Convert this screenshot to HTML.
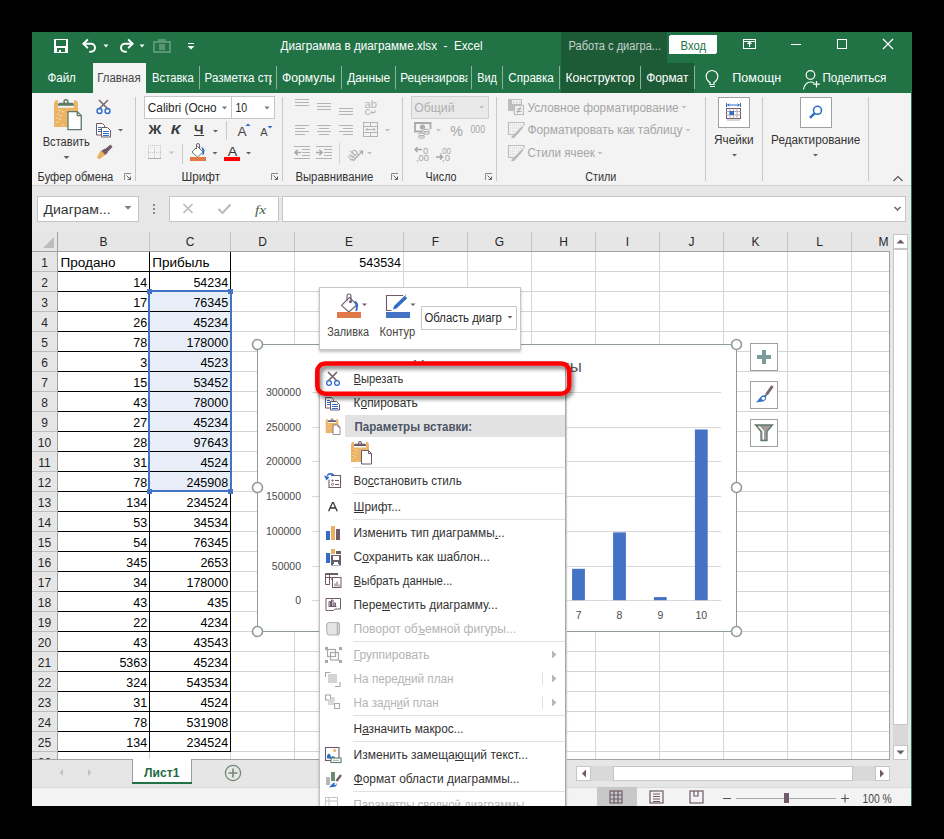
<!DOCTYPE html>
<html><head><meta charset="utf-8"><title>Excel</title>
<style>html,body{margin:0;padding:0;background:#000;width:944px;height:839px;overflow:hidden}
text{shape-rendering:auto;white-space:pre}</style></head>
<body><svg width="944" height="839" viewBox="0 0 944 839" shape-rendering="crispEdges" style="display:block"><rect x="0" y="0" width="944" height="839" fill="#000" />
<rect x="32" y="32" width="880" height="774" fill="#f3f3f3" />
<rect x="32" y="32" width="880" height="61" fill="#217346" />
<rect x="561" y="32" width="106" height="31" fill="#1d5b37" />
<rect x="561" y="63" width="133" height="30" fill="#1d5b37" />
<rect x="93" y="63" width="53" height="30" fill="#f3f3f3" />
<text x="280.5" y="49.5" font-size="12" fill="#fff" font-family="Liberation Sans" textLength="202" lengthAdjust="spacingAndGlyphs" >Диаграмма в диаграмме.xlsx  -  Excel</text>
<text x="568.5" y="49.5" font-size="12" fill="#c8d2cc" font-family="Liberation Sans" textLength="92.5" lengthAdjust="spacingAndGlyphs" >Работа с диагра...</text>
<rect x="669" y="35" width="48" height="19" fill="#fff" rx="2"/>
<text x="680.5" y="49.5" font-size="12" fill="#217346" font-family="Liberation Sans" textLength="25.5" lengthAdjust="spacingAndGlyphs" >Вход</text>
<defs><clipPath id="c1"><rect x="190" y="63" width="82" height="30"/></clipPath><clipPath id="c2"><rect x="396" y="63" width="71.6" height="30"/></clipPath></defs>
<text x="47.4" y="81.6" font-size="12" fill="#fff" font-family="Liberation Sans" textLength="28.5" lengthAdjust="spacingAndGlyphs" >Файл</text>
<text x="97.3" y="81.6" font-size="12" fill="#444" font-family="Liberation Sans" textLength="43.3" lengthAdjust="spacingAndGlyphs" >Главная</text>
<text x="152.1" y="81.6" font-size="12" fill="#fff" font-family="Liberation Sans" textLength="41.6" lengthAdjust="spacingAndGlyphs" >Вставка</text>
<g clip-path="url(#c1)">
<text x="204.6" y="81.6" font-size="12" fill="#fff" font-family="Liberation Sans" textLength="70.5" lengthAdjust="spacingAndGlyphs" >Разметка стр</text>
</g>
<text x="282" y="81.6" font-size="12" fill="#fff" font-family="Liberation Sans" textLength="53" lengthAdjust="spacingAndGlyphs" >Формулы</text>
<text x="347.2" y="81.6" font-size="12" fill="#fff" font-family="Liberation Sans" textLength="43" lengthAdjust="spacingAndGlyphs" >Данные</text>
<g clip-path="url(#c2)">
<text x="400.3" y="81.6" font-size="12" fill="#fff" font-family="Liberation Sans" textLength="71" lengthAdjust="spacingAndGlyphs" >Рецензирова</text>
</g>
<text x="477.2" y="81.6" font-size="12" fill="#fff" font-family="Liberation Sans" textLength="19.7" lengthAdjust="spacingAndGlyphs" >Вид</text>
<text x="508.3" y="81.6" font-size="12" fill="#fff" font-family="Liberation Sans" textLength="45.5" lengthAdjust="spacingAndGlyphs" >Справка</text>
<text x="565.4" y="81.6" font-size="12" fill="#fff" font-family="Liberation Sans" textLength="69.4" lengthAdjust="spacingAndGlyphs" >Конструктор</text>
<text x="646.2" y="81.6" font-size="12" fill="#fff" font-family="Liberation Sans" textLength="42.2" lengthAdjust="spacingAndGlyphs" >Формат</text>
<rect x="199" y="66" width="1" height="23" fill="#8cb39b" />
<rect x="276" y="66" width="1" height="23" fill="#8cb39b" />
<rect x="341" y="66" width="1" height="23" fill="#8cb39b" />
<rect x="395" y="66" width="1" height="23" fill="#8cb39b" />
<rect x="471" y="66" width="1" height="23" fill="#8cb39b" />
<rect x="502" y="66" width="1" height="23" fill="#8cb39b" />
<rect x="559" y="66" width="1" height="23" fill="#8cb39b" />
<rect x="640" y="66" width="1" height="23" fill="#8cb39b" />
<rect x="694" y="66" width="1" height="23" fill="#8cb39b" />
<text x="732.3" y="81.6" font-size="12" fill="#fff" font-family="Liberation Sans" textLength="49" lengthAdjust="spacingAndGlyphs" >Помощн</text>
<text x="822.4" y="81.6" font-size="12" fill="#fff" font-family="Liberation Sans" textLength="64" lengthAdjust="spacingAndGlyphs" >Поделиться</text>
<rect x="54" y="39" width="14" height="14" fill="#fff" />
<rect x="56" y="40" width="10" height="6" fill="#217346" />
<rect x="57" y="48" width="8" height="4" fill="#217346" />
<rect x="59" y="50" width="2" height="2" fill="#fff" />
<g shape-rendering="auto" fill="none" stroke="#fff" stroke-width="2" stroke-linecap="round" stroke-linejoin="round"><path d="M83.5 43.8h7.5a4 4 0 0 1 0 8h-1"/><path d="M87.3 40l-3.8 3.8l3.8 3.8"/></g>
<path d="M103.5 44.5h5l-2.5 3z" fill="#fff" shape-rendering="auto"/>
<g shape-rendering="auto" fill="none" stroke="#fff" stroke-width="2" stroke-linecap="round" stroke-linejoin="round"><path d="M132.5 43.8h-7.5a4 4 0 0 0 0 8h1"/><path d="M128.7 40l3.8 3.8l-3.8 3.8"/></g>
<path d="M139.5 44.5h5l-2.5 3z" fill="#fff" shape-rendering="auto"/>
<g opacity="0.45">
<rect x="154" y="42" width="16" height="10" fill="none" stroke="#9fc2ac" stroke-width="1.5"/>
<rect x="158" y="39" width="8" height="3" fill="#9fc2ac" />
<rect x="159" y="44" width="6" height="6" fill="#9fc2ac" />
</g>
<rect x="188" y="43" width="6" height="1.3" fill="#fff" />
<path d="M187.5 46h7l-3.5 3.5z" fill="#fff" shape-rendering="auto"/>
<rect x="743.6" y="39.6" width="11.8" height="8.8" fill="none" stroke="#fff" stroke-width="1.2" />
<path d="M749.5 47v-5m-2 2l2-2l2 2" fill="none" stroke="#fff" stroke-width="1.1" shape-rendering="auto"/>
<rect x="744" y="41" width="12" height="1" fill="#fff" />
<rect x="791" y="44" width="10" height="1" fill="#fff" />
<rect x="837.5" y="39.5" width="9" height="9" fill="none" stroke="#fff" stroke-width="1" />
<path d="M883 39l10 10M893 39l-10 10" fill="none" stroke="#fff" stroke-width="1.2" shape-rendering="auto"/>
<path d="M710 84.5v-2c-2.2-1.3-3.8-3.5-3.8-6.2a5.8 5.8 0 0 1 11.6 0c0 2.7-1.6 4.9-3.8 6.2v2z" fill="none" stroke="#fff" stroke-width="1.2" shape-rendering="auto"/>
<rect x="710" y="86" width="5" height="1" fill="#fff" />
<g shape-rendering="auto" fill="none" stroke="#fff" stroke-width="1.2"><circle cx="810.5" cy="75" r="4.3"/><path d="M803.5 89.5c0.5-4.5 3.5-7.5 7-7.5c1.5 0 2.7 0.4 3.5 1"/><path d="M816.5 81v6.5M813.2 84.2h6.6"/></g>
<rect x="32" y="185" width="880" height="1" fill="#d4d4d4" />
<rect x="32" y="186" width="880" height="46" fill="#e7e7e7" />
<rect x="135" y="97" width="1" height="84" fill="#c8c8c8" />
<rect x="282" y="97" width="1" height="84" fill="#c8c8c8" />
<rect x="402" y="97" width="1" height="84" fill="#c8c8c8" />
<rect x="496" y="97" width="1" height="84" fill="#c8c8c8" />
<rect x="705" y="97" width="1" height="84" fill="#c8c8c8" />
<rect x="762" y="97" width="1" height="84" fill="#c8c8c8" />
<rect x="868" y="97" width="1" height="84" fill="#c8c8c8" />
<text x="42.7" y="145.8" font-size="12" fill="#333" font-family="Liberation Sans" textLength="47" lengthAdjust="spacingAndGlyphs" >Вставить</text>
<path d="M63.5 156h6l-3 3z" fill="#6f5a6a" shape-rendering="auto"/>
<g transform="translate(54 99) scale(1.33)" shape-rendering="auto"><path d="M0 3.5q0-1.5 1.5-2.5h1.5v5.5h12v-5.5h1.5q1.5 1 1.5 2.5v17.5h-18z" fill="#ebb467"/><path d="M3 5h12v-0.7c0-1-0.8-1.5-1.5-1.5h-2.5v-0.8a2 2 0 0 0-4 0v0.8h-2.5c-0.7 0-1.5 0.5-1.5 1.5z" fill="#5f7a65"/><rect x="8.2" y="1.3" width="1.6" height="1.4" fill="#fff"/><g fill="#fbe7c6"><circle cx="4.2" cy="8.5" r="0.6"/><circle cx="3.2" cy="11.5" r="0.6"/><circle cx="5.3" cy="12.5" r="0.6"/><circle cx="2.5" cy="14.5" r="0.6"/><circle cx="4.5" cy="15.5" r="0.6"/><circle cx="2.5" cy="17.5" r="0.6"/><circle cx="6.5" cy="19.5" r="0.6"/><circle cx="6.5" cy="9.5" r="0.6"/></g><path d="M10.5 9.5h7l3 3v10.5h-10z" fill="#fff" stroke="#5f7a65" stroke-width="1"/><path d="M17.5 9.5v3h3" fill="none" stroke="#5f7a65" stroke-width="1"/></g>
<g shape-rendering="auto" fill="none"><path d="M99 100l9 9M108 100l-9 9" stroke="#74646e" stroke-width="1.5"/><circle cx="99.5" cy="111" r="2.5" stroke="#2f6ec4" stroke-width="1.4"/><circle cx="107.5" cy="111" r="2.5" stroke="#2f6ec4" stroke-width="1.4"/></g>
<g><path d="M96.5 123.5h6l2 2v9.5h-8z" fill="#fff" stroke="#6f5a6a" shape-rendering="auto"/><path d="M101.5 127.5h6l3 3v6.5h-9z" fill="#fff" stroke="#6f5a6a" shape-rendering="auto"/></g>
<rect x="98" y="127" width="3" height="1" fill="#2f6ec4" />
<rect x="98" y="129" width="3" height="1" fill="#2f6ec4" />
<rect x="98" y="131" width="3" height="1" fill="#2f6ec4" />
<rect x="103" y="131" width="6" height="1" fill="#2f6ec4" />
<rect x="103" y="133" width="6" height="1" fill="#2f6ec4" />
<rect x="103" y="135" width="6" height="1" fill="#2f6ec4" />
<path d="M118 129h5l-2.5 2.5z" fill="#6f5a6a" shape-rendering="auto"/>
<g shape-rendering="auto"><path d="M104 150l6.5-5.5l2 2.5l-6 6z" fill="#6f5a6a"/><path d="M97 157l4-7l5 4.5l-7 5z" fill="#e8b062"/><path d="M101.5 151l3-2.5l3.5 3.5l-2.5 3z" fill="#6f5a6a"/></g>
<text x="37.6" y="180.5" font-size="12" fill="#333" font-family="Liberation Sans" textLength="75.7" lengthAdjust="spacingAndGlyphs" >Буфер обмена</text>
<g shape-rendering="auto"><path d="M124.5 180v-6.5h6.5" fill="none" stroke="#8a8a8a" stroke-width="1"/><path d="M126.5 175.5l4 4m0-3v3h-3" fill="none" stroke="#666" stroke-width="1"/></g>
<rect x="144" y="96" width="131" height="23" fill="#fff" />
<rect x="144.5" y="96.5" width="130" height="22" fill="none" stroke="#c6c6c6" stroke-width="1" />
<rect x="231" y="97" width="1" height="21" fill="#c6c6c6" />
<text x="147.8" y="112" font-size="12" fill="#262626" font-family="Liberation Sans" textLength="68.8" lengthAdjust="spacingAndGlyphs" >Calibri (Осно</text>
<path d="M222 106.5h5l-2.5 3z" fill="#777" shape-rendering="auto"/>
<text x="235.5" y="112" font-size="12" fill="#262626" font-family="Liberation Sans" textLength="11.7" lengthAdjust="spacingAndGlyphs" >10</text>
<path d="M264.5 106.5h5l-2.5 3z" fill="#777" shape-rendering="auto"/>
<text x="148.5" y="134" font-size="12.5" fill="#3a3a3a" font-family="Liberation Sans" textLength="12.8" lengthAdjust="spacingAndGlyphs" font-weight="bold" >Ж</text>
<text x="170.8" y="134" font-size="12.5" fill="#3a3a3a" font-family="Liberation Sans" textLength="9.8" lengthAdjust="spacingAndGlyphs" font-weight="bold" font-style="italic">К</text>
<text x="194.1" y="134" font-size="12.5" fill="#3a3a3a" font-family="Liberation Sans" textLength="9.5" lengthAdjust="spacingAndGlyphs" font-weight="bold" >Ч</text>
<rect x="194" y="135" width="10" height="1" fill="#3a3a3a" />
<path d="M213 130h5l-2.5 2.5z" fill="#6f5a6a" shape-rendering="auto"/>
<rect x="226" y="121" width="1" height="19" fill="#c8c8c8" />
<text x="237.6" y="136.3" font-size="13.5" fill="#444" font-family="Liberation Sans" textLength="9.1" lengthAdjust="spacingAndGlyphs" >A</text>
<path d="M245.5 126l2.5-2.5l2.5 2.5z" fill="#2f6ec4" shape-rendering="auto"/>
<text x="260.3" y="136.3" font-size="11" fill="#444" font-family="Liberation Sans" textLength="7.4" lengthAdjust="spacingAndGlyphs" >A</text>
<path d="M267.5 126l2.5 2.5l2.5-2.5z" fill="#2f6ec4" shape-rendering="auto"/>
<g fill="#c4c4c4">
<rect x="148" y="145" width="1" height="1" fill="#c4c4c4" />
<rect x="148" y="152" width="1" height="1" fill="#c4c4c4" />
<rect x="148" y="145" width="1" height="1" fill="#c4c4c4" />
<rect x="154" y="145" width="1" height="1" fill="#c4c4c4" />
<rect x="160" y="145" width="1" height="1" fill="#c4c4c4" />
<rect x="150" y="145" width="1" height="1" fill="#c4c4c4" />
<rect x="150" y="152" width="1" height="1" fill="#c4c4c4" />
<rect x="148" y="147" width="1" height="1" fill="#c4c4c4" />
<rect x="154" y="147" width="1" height="1" fill="#c4c4c4" />
<rect x="160" y="147" width="1" height="1" fill="#c4c4c4" />
<rect x="152" y="145" width="1" height="1" fill="#c4c4c4" />
<rect x="152" y="152" width="1" height="1" fill="#c4c4c4" />
<rect x="148" y="149" width="1" height="1" fill="#c4c4c4" />
<rect x="154" y="149" width="1" height="1" fill="#c4c4c4" />
<rect x="160" y="149" width="1" height="1" fill="#c4c4c4" />
<rect x="154" y="145" width="1" height="1" fill="#c4c4c4" />
<rect x="154" y="152" width="1" height="1" fill="#c4c4c4" />
<rect x="148" y="151" width="1" height="1" fill="#c4c4c4" />
<rect x="154" y="151" width="1" height="1" fill="#c4c4c4" />
<rect x="160" y="151" width="1" height="1" fill="#c4c4c4" />
<rect x="156" y="145" width="1" height="1" fill="#c4c4c4" />
<rect x="156" y="152" width="1" height="1" fill="#c4c4c4" />
<rect x="148" y="153" width="1" height="1" fill="#c4c4c4" />
<rect x="154" y="153" width="1" height="1" fill="#c4c4c4" />
<rect x="160" y="153" width="1" height="1" fill="#c4c4c4" />
<rect x="158" y="145" width="1" height="1" fill="#c4c4c4" />
<rect x="158" y="152" width="1" height="1" fill="#c4c4c4" />
<rect x="148" y="155" width="1" height="1" fill="#c4c4c4" />
<rect x="154" y="155" width="1" height="1" fill="#c4c4c4" />
<rect x="160" y="155" width="1" height="1" fill="#c4c4c4" />
<rect x="160" y="145" width="1" height="1" fill="#c4c4c4" />
<rect x="160" y="152" width="1" height="1" fill="#c4c4c4" />
<rect x="148" y="157" width="1" height="1" fill="#c4c4c4" />
<rect x="154" y="157" width="1" height="1" fill="#c4c4c4" />
<rect x="160" y="157" width="1" height="1" fill="#c4c4c4" />
</g>
<rect x="148" y="158" width="13" height="1" fill="#b0b0b0" />
<path d="M169 151.5h5l-2.5 2.5z" fill="#c0c0c0" shape-rendering="auto"/>
<rect x="182" y="144" width="1" height="20" fill="#c8c8c8" />
<g shape-rendering="auto" fill="none" stroke="#5f7a65" stroke-width="1"><path d="M192 152l5.5-5.5l5.5 5.5l-5.5 5z" fill="#fff"/><path d="M196.5 149v-4a1.5 1.5 0 0 1 3 0v4" stroke="#6f5a6a"/></g><path d="M201.5 147l2 1.2l1 2.3l-0.6 4l-1.5 0.8l0.3-3.5z" fill="#2f6ec4" shape-rendering="auto"/>
<rect x="190" y="157" width="16" height="4" fill="#e07848" />
<path d="M212.5 152h5l-2.5 2.5z" fill="#6f5a6a" shape-rendering="auto"/>
<text x="227.8" y="156" font-size="13.5" fill="#333" font-family="Liberation Sans" textLength="9.5" lengthAdjust="spacingAndGlyphs" >A</text>
<rect x="224" y="157" width="16" height="4" fill="#ff0000" />
<path d="M246 152h5l-2.5 2.5z" fill="#6f5a6a" shape-rendering="auto"/>
<text x="181.5" y="180.5" font-size="12" fill="#333" font-family="Liberation Sans" textLength="38.6" lengthAdjust="spacingAndGlyphs" >Шрифт</text>
<g shape-rendering="auto"><path d="M271.5 180v-6.5h6.5" fill="none" stroke="#8a8a8a" stroke-width="1"/><path d="M273.5 175.5l4 4m0-3v3h-3" fill="none" stroke="#666" stroke-width="1"/></g>
<rect x="295" y="99" width="14" height="1" fill="#b4b4b4" />
<rect x="295" y="102" width="14" height="1" fill="#b4b4b4" />
<rect x="295" y="105" width="14" height="1" fill="#b4b4b4" />
<rect x="317" y="103" width="14" height="1" fill="#b4b4b4" />
<rect x="317" y="106" width="14" height="1" fill="#b4b4b4" />
<rect x="317" y="109" width="14" height="1" fill="#b4b4b4" />
<rect x="339" y="108" width="14" height="1" fill="#b4b4b4" />
<rect x="339" y="111" width="14" height="1" fill="#b4b4b4" />
<rect x="339" y="114" width="14" height="1" fill="#b4b4b4" />
<text x="364.5" y="107.5" font-size="11" fill="#b4b4b4" font-family="Liberation Sans" textLength="12.5" lengthAdjust="spacingAndGlyphs" >ab</text>
<text x="364.5" y="114.5" font-size="11" fill="#b4b4b4" font-family="Liberation Sans" textLength="6" lengthAdjust="spacingAndGlyphs" >c</text>
<path d="M375 110v2.5h-4m1.5-1.5l-1.5 1.5l1.5 1.5" fill="none" stroke="#b4b4b4" stroke-width="1" shape-rendering="auto"/>
<rect x="295" y="125" width="14" height="1" fill="#b4b4b4" />
<rect x="295" y="128" width="10" height="1" fill="#b4b4b4" />
<rect x="295" y="131" width="14" height="1" fill="#b4b4b4" />
<rect x="295" y="134" width="10" height="1" fill="#b4b4b4" />
<rect x="317" y="125" width="14" height="1" fill="#b4b4b4" />
<rect x="319" y="128" width="10" height="1" fill="#b4b4b4" />
<rect x="317" y="131" width="14" height="1" fill="#b4b4b4" />
<rect x="319" y="134" width="10" height="1" fill="#b4b4b4" />
<rect x="339" y="125" width="14" height="1" fill="#b4b4b4" />
<rect x="343" y="128" width="10" height="1" fill="#b4b4b4" />
<rect x="339" y="131" width="14" height="1" fill="#b4b4b4" />
<rect x="343" y="134" width="10" height="1" fill="#b4b4b4" />
<rect x="363.5" y="122.5" width="14" height="14" fill="none" stroke="#b4b4b4" stroke-width="1" />
<rect x="363" y="126" width="15" height="1" fill="#b4b4b4" />
<rect x="363" y="132" width="15" height="1" fill="#b4b4b4" />
<rect x="370" y="122" width="1" height="4" fill="#b4b4b4" />
<rect x="370" y="133" width="1" height="4" fill="#b4b4b4" />
<path d="M366 129.5h9m-7.5-1.5l-1.5 1.5l1.5 1.5m6-3l1.5 1.5l-1.5 1.5" fill="none" stroke="#b4b4b4" stroke-width="1" shape-rendering="auto"/>
<path d="M385 129h5l-2.5 2.5z" fill="#c0c0c0" shape-rendering="auto"/>
<rect x="294" y="146" width="16" height="1" fill="#b4b4b4" />
<rect x="294" y="158" width="16" height="1" fill="#b4b4b4" />
<rect x="302" y="149" width="8" height="1" fill="#b4b4b4" />
<rect x="302" y="152" width="8" height="1" fill="#b4b4b4" />
<rect x="302" y="155" width="8" height="1" fill="#b4b4b4" />
<rect x="316" y="146" width="16" height="1" fill="#b4b4b4" />
<rect x="316" y="158" width="16" height="1" fill="#b4b4b4" />
<rect x="324" y="149" width="8" height="1" fill="#b4b4b4" />
<rect x="324" y="152" width="8" height="1" fill="#b4b4b4" />
<rect x="324" y="155" width="8" height="1" fill="#b4b4b4" />
<path d="M301 152.5h-6m2.7-2.7l-2.7 2.7l2.7 2.7" fill="none" stroke="#a8a8a8" stroke-width="1.5" shape-rendering="auto"/>
<path d="M316 152.5h6m-2.7-2.7l2.7 2.7l-2.7 2.7" fill="none" stroke="#a8a8a8" stroke-width="1.5" shape-rendering="auto"/>
<rect x="339" y="143" width="1" height="21" fill="#d4d4d4" />
<g shape-rendering="auto"><text x="346" y="158" font-size="10.5" fill="#a8a8a8" font-family="Liberation Sans" transform="rotate(-50 352 154)">ab</text><path d="M353 161l9.5-10m-3.2 0h3.2v3.2" stroke="#a8a8a8" fill="none" stroke-width="1.2"/></g>
<path d="M367 152h5l-2.5 2.5z" fill="#c0c0c0" shape-rendering="auto"/>
<text x="295.4" y="180.5" font-size="12" fill="#333" font-family="Liberation Sans" textLength="78" lengthAdjust="spacingAndGlyphs" >Выравнивание</text>
<g shape-rendering="auto"><path d="M391.5 180v-6.5h6.5" fill="none" stroke="#8a8a8a" stroke-width="1"/><path d="M393.5 175.5l4 4m0-3v3h-3" fill="none" stroke="#666" stroke-width="1"/></g>
<rect x="411" y="96" width="78" height="23" fill="#e9e9e9" />
<rect x="411.5" y="96.5" width="77" height="22" fill="none" stroke="#cfcfcf" stroke-width="1" />
<text x="414.2" y="112" font-size="12" fill="#b0b0b0" font-family="Liberation Sans" textLength="40.3" lengthAdjust="spacingAndGlyphs" >Общий</text>
<path d="M479 106h5l-2.5 2.5z" fill="#c0c0c0" shape-rendering="auto"/>
<g shape-rendering="auto" fill="none" stroke="#ababab"><path d="M423 131.5h-8v-8.5h15.5v6" stroke-width="1.8"/><circle cx="422.5" cy="127" r="2.6" fill="#ababab" stroke="none"/><ellipse cx="426.5" cy="130.5" rx="3" ry="1.3" stroke-width="1"/><ellipse cx="426.5" cy="133" rx="3" ry="1.3" stroke-width="1"/><ellipse cx="421.5" cy="134.5" rx="3" ry="1.3" stroke-width="1"/><ellipse cx="421.5" cy="137" rx="3" ry="1.3" stroke-width="1"/></g>
<path d="M436 129h5l-2.5 2.5z" fill="#c0c0c0" shape-rendering="auto"/>
<text x="450.3" y="136" font-size="14" fill="#a4a4a4" font-family="Liberation Sans" textLength="12.6" lengthAdjust="spacingAndGlyphs" >%</text>
<text x="470.5" y="133.4" font-size="10" fill="#a4a4a4" font-family="Liberation Sans" textLength="14.5" lengthAdjust="spacingAndGlyphs" >000</text>
<text x="423" y="153.5" font-size="9.5" fill="#a4a4a4" font-family="Liberation Sans" >0</text>
<text x="416" y="160.5" font-size="9.5" fill="#a4a4a4" font-family="Liberation Sans" textLength="13" lengthAdjust="spacingAndGlyphs" >,00</text>
<path d="M422 149.5h-7m2.5-2.5l-2.5 2.5l2.5 2.5" fill="none" stroke="#a4a4a4" stroke-width="1.3" shape-rendering="auto"/>
<text x="440" y="153.5" font-size="9.5" fill="#a4a4a4" font-family="Liberation Sans" textLength="11" lengthAdjust="spacingAndGlyphs" >,00</text>
<text x="442" y="160.5" font-size="9.5" fill="#a4a4a4" font-family="Liberation Sans" textLength="8" lengthAdjust="spacingAndGlyphs" >,0</text>
<path d="M436 157h6.5m-2.5-2.5l2.5 2.5l-2.5 2.5" fill="none" stroke="#a4a4a4" stroke-width="1.3" shape-rendering="auto"/>
<text x="425.6" y="180.5" font-size="12" fill="#333" font-family="Liberation Sans" textLength="31" lengthAdjust="spacingAndGlyphs" >Число</text>
<g shape-rendering="auto"><path d="M485.5 180v-6.5h6.5" fill="none" stroke="#8a8a8a" stroke-width="1"/><path d="M487.5 175.5l4 4m0-3v3h-3" fill="none" stroke="#666" stroke-width="1"/></g>
<g shape-rendering="auto"><rect x="508" y="99" width="14" height="12" fill="#bdbdbd"/><path d="M512 100h9v4h-9z" fill="#f3f3f3"/><path d="M514 101.5v2M517 101.5v2M520 101.5v2" stroke="#bdbdbd"/><rect x="514.5" y="105.5" width="9" height="9" fill="#f3f3f3" stroke="#bdbdbd" stroke-width="1.2"/><path d="M516.5 109h5M516.5 111.5h5M520.5 107l-3 6" stroke="#a0a0a0" stroke-width="0.9"/></g>
<text x="527.4" y="111.6" font-size="12" fill="#a6a6a6" font-family="Liberation Sans" textLength="151.3" lengthAdjust="spacingAndGlyphs" >Условное форматирование</text>
<path d="M681.5 106h5l-2.5 2.5z" fill="#c0c0c0" shape-rendering="auto"/>
<g shape-rendering="auto"><path d="M508.5 134.5v-12h15.5v3" fill="none" stroke="#bdbdbd" stroke-width="1.2"/><path d="M508.5 134.5h6" stroke="#bdbdbd" stroke-width="1.2"/><path d="M510 125h12M510 128h9M510 131h5" stroke="#d0d0d0" stroke-dasharray="1 1"/><path d="M511 137.5l9-9.5l3.5-3l-1 3.5l-7.5 8.5c-1 1.5-2.5 1.5-4 0.5z" fill="#b8b8b8"/></g>
<text x="527.4" y="134.4" font-size="12" fill="#a6a6a6" font-family="Liberation Sans" textLength="155.1" lengthAdjust="spacingAndGlyphs" >Форматировать как таблицу</text>
<path d="M685.5 129h5l-2.5 2.5z" fill="#c0c0c0" shape-rendering="auto"/>
<g shape-rendering="auto"><path d="M508.5 157.5v-12h15.5v3" fill="none" stroke="#bdbdbd" stroke-width="1.2"/><path d="M508.5 157.5h6" stroke="#bdbdbd" stroke-width="1.2"/><path d="M510 148h12M510 151h9M510 154h5" stroke="#d0d0d0" stroke-dasharray="1 1"/><path d="M511 160.5l9-9.5l3.5-3l-1 3.5l-7.5 8.5c-1 1.5-2.5 1.5-4 0.5z" fill="#b8b8b8"/></g>
<text x="527.4" y="157.4" font-size="12" fill="#a6a6a6" font-family="Liberation Sans" textLength="67.4" lengthAdjust="spacingAndGlyphs" >Стили ячеек</text>
<path d="M597.5 152h5l-2.5 2.5z" fill="#c0c0c0" shape-rendering="auto"/>
<text x="585.3" y="180.5" font-size="12" fill="#333" font-family="Liberation Sans" textLength="31.1" lengthAdjust="spacingAndGlyphs" >Стили</text>
<rect x="718" y="97" width="32" height="31" fill="#fff" />
<rect x="718.5" y="97.5" width="31" height="30" fill="none" stroke="#a0a0a0" stroke-width="1" />
<g shape-rendering="auto"><path d="M726 105h15M726.5 103v4M740.5 103v4M728 105l1.5-1.3M728 105l1.5 1.3M739 105l-1.5-1.3M739 105l-1.5 1.3" stroke="#2f6ec4" fill="none"/><rect x="726.5" y="108.5" width="14" height="10" fill="#fff" stroke="#6f5a6a"/><path d="M726.5 111.5h14M726.5 115h14M730 108.5v10M733.5 108.5v10M737 108.5v10" stroke="#b9aab4"/><rect x="729.5" y="111" width="4.5" height="4" fill="#2f6ec4"/><path d="M727 120h13" stroke="#b9aab4"/></g>
<text x="714" y="143.9" font-size="12" fill="#333" font-family="Liberation Sans" textLength="39.6" lengthAdjust="spacingAndGlyphs" >Ячейки</text>
<path d="M732 154h5l-2.5 2.5z" fill="#6f5a6a" shape-rendering="auto"/>
<rect x="800" y="97" width="32" height="31" fill="#fff" />
<rect x="800.5" y="97.5" width="31" height="30" fill="none" stroke="#a0a0a0" stroke-width="1" />
<g shape-rendering="auto" fill="none" stroke="#2f6ec4" stroke-width="1.6"><circle cx="817.5" cy="110.3" r="4"/><path d="M814.5 113.3l-4.5 4.5" stroke-width="2.4"/></g>
<text x="771.1" y="143.9" font-size="12" fill="#333" font-family="Liberation Sans" textLength="89.2" lengthAdjust="spacingAndGlyphs" >Редактирование</text>
<path d="M813 154h5l-2.5 2.5z" fill="#6f5a6a" shape-rendering="auto"/>
<path d="M893.5 181l4.5-4.5l4.5 4.5" fill="none" stroke="#555" stroke-width="1.1" shape-rendering="auto"/>
<rect x="37" y="196" width="102" height="26" fill="#fff" />
<rect x="37.5" y="196.5" width="101" height="25" fill="none" stroke="#c6c6c6" stroke-width="1" />
<text x="43.6" y="214" font-size="12.5" fill="#333" font-family="Liberation Sans" textLength="67" lengthAdjust="spacingAndGlyphs" >Диаграм...</text>
<path d="M124.5 206h7l-3.5 3.8z" fill="#6a8a74" shape-rendering="auto"/>
<rect x="153" y="204" width="2" height="2" fill="#8a8a8a" />
<rect x="153" y="208" width="2" height="2" fill="#8a8a8a" />
<rect x="153" y="212" width="2" height="2" fill="#8a8a8a" />
<rect x="169" y="196" width="110" height="26" fill="#fff" />
<rect x="169.5" y="196.5" width="109" height="25" fill="none" stroke="#c6c6c6" stroke-width="1" />
<path d="M183.5 204l9 9M192.5 204l-9 9" fill="none" stroke="#bcbcbc" stroke-width="1.7" shape-rendering="auto"/>
<path d="M218.5 209l4 4l8-8.5" fill="none" stroke="#bcbcbc" stroke-width="2.2" shape-rendering="auto"/>
<text x="255" y="213.5" font-size="13" fill="#4a5e50" font-family="Liberation Serif" textLength="11" lengthAdjust="spacingAndGlyphs" font-style="italic">fx</text>
<rect x="282" y="196" width="624" height="26" fill="#fff" />
<rect x="282.5" y="196.5" width="623" height="25" fill="none" stroke="#c6c6c6" stroke-width="1" />
<path d="M894.5 207l3 3l3-3" fill="none" stroke="#666" stroke-width="1.5" shape-rendering="auto"/>
<rect x="32" y="232" width="858" height="20" fill="#e6e6e6" />
<rect x="32" y="252" width="25" height="507" fill="#e6e6e6" />
<rect x="58" y="252" width="832" height="507" fill="#fff" />
<rect x="149" y="232" width="1" height="19" fill="#c3c3c3" />
<rect x="230" y="232" width="1" height="19" fill="#c3c3c3" />
<rect x="294" y="232" width="1" height="19" fill="#c3c3c3" />
<rect x="403" y="232" width="1" height="19" fill="#c3c3c3" />
<rect x="467" y="232" width="1" height="19" fill="#c3c3c3" />
<rect x="531" y="232" width="1" height="19" fill="#c3c3c3" />
<rect x="595" y="232" width="1" height="19" fill="#c3c3c3" />
<rect x="659" y="232" width="1" height="19" fill="#c3c3c3" />
<rect x="723" y="232" width="1" height="19" fill="#c3c3c3" />
<rect x="787" y="232" width="1" height="19" fill="#c3c3c3" />
<rect x="851" y="232" width="1" height="19" fill="#c3c3c3" />
<rect x="32" y="251" width="858" height="1" fill="#9ea3a0" />
<rect x="57" y="232" width="1" height="527" fill="#9ea3a0" />
<rect x="889" y="251" width="1" height="509" fill="#9ea3a0" />
<path d="M54 237v11h-11z" fill="#bdbdbd" shape-rendering="auto"/>
<text x="103.5" y="246" font-size="12" fill="#262626" font-family="Liberation Sans" text-anchor="middle" >B</text>
<text x="190.0" y="246" font-size="12" fill="#262626" font-family="Liberation Sans" text-anchor="middle" >C</text>
<text x="262.5" y="246" font-size="12" fill="#262626" font-family="Liberation Sans" text-anchor="middle" >D</text>
<text x="349.0" y="246" font-size="12" fill="#262626" font-family="Liberation Sans" text-anchor="middle" >E</text>
<text x="435.5" y="246" font-size="12" fill="#262626" font-family="Liberation Sans" text-anchor="middle" >F</text>
<text x="499.5" y="246" font-size="12" fill="#262626" font-family="Liberation Sans" text-anchor="middle" >G</text>
<text x="563.5" y="246" font-size="12" fill="#262626" font-family="Liberation Sans" text-anchor="middle" >H</text>
<text x="627.5" y="246" font-size="12" fill="#262626" font-family="Liberation Sans" text-anchor="middle" >I</text>
<text x="691.5" y="246" font-size="12" fill="#262626" font-family="Liberation Sans" text-anchor="middle" >J</text>
<text x="755.5" y="246" font-size="12" fill="#262626" font-family="Liberation Sans" text-anchor="middle" >K</text>
<text x="819.5" y="246" font-size="12" fill="#262626" font-family="Liberation Sans" text-anchor="middle" >L</text>
<text x="883.5" y="246" font-size="12" fill="#262626" font-family="Liberation Sans" text-anchor="middle" >M</text>
<rect x="58" y="271" width="831" height="1" fill="#d4d4d4" />
<rect x="32" y="271" width="25" height="1" fill="#bcbcbc" />
<rect x="58" y="291" width="831" height="1" fill="#d4d4d4" />
<rect x="32" y="291" width="25" height="1" fill="#bcbcbc" />
<rect x="58" y="311" width="831" height="1" fill="#d4d4d4" />
<rect x="32" y="311" width="25" height="1" fill="#bcbcbc" />
<rect x="58" y="331" width="831" height="1" fill="#d4d4d4" />
<rect x="32" y="331" width="25" height="1" fill="#bcbcbc" />
<rect x="58" y="351" width="831" height="1" fill="#d4d4d4" />
<rect x="32" y="351" width="25" height="1" fill="#bcbcbc" />
<rect x="58" y="371" width="831" height="1" fill="#d4d4d4" />
<rect x="32" y="371" width="25" height="1" fill="#bcbcbc" />
<rect x="58" y="391" width="831" height="1" fill="#d4d4d4" />
<rect x="32" y="391" width="25" height="1" fill="#bcbcbc" />
<rect x="58" y="411" width="831" height="1" fill="#d4d4d4" />
<rect x="32" y="411" width="25" height="1" fill="#bcbcbc" />
<rect x="58" y="431" width="831" height="1" fill="#d4d4d4" />
<rect x="32" y="431" width="25" height="1" fill="#bcbcbc" />
<rect x="58" y="451" width="831" height="1" fill="#d4d4d4" />
<rect x="32" y="451" width="25" height="1" fill="#bcbcbc" />
<rect x="58" y="471" width="831" height="1" fill="#d4d4d4" />
<rect x="32" y="471" width="25" height="1" fill="#bcbcbc" />
<rect x="58" y="491" width="831" height="1" fill="#d4d4d4" />
<rect x="32" y="491" width="25" height="1" fill="#bcbcbc" />
<rect x="58" y="511" width="831" height="1" fill="#d4d4d4" />
<rect x="32" y="511" width="25" height="1" fill="#bcbcbc" />
<rect x="58" y="531" width="831" height="1" fill="#d4d4d4" />
<rect x="32" y="531" width="25" height="1" fill="#bcbcbc" />
<rect x="58" y="551" width="831" height="1" fill="#d4d4d4" />
<rect x="32" y="551" width="25" height="1" fill="#bcbcbc" />
<rect x="58" y="571" width="831" height="1" fill="#d4d4d4" />
<rect x="32" y="571" width="25" height="1" fill="#bcbcbc" />
<rect x="58" y="591" width="831" height="1" fill="#d4d4d4" />
<rect x="32" y="591" width="25" height="1" fill="#bcbcbc" />
<rect x="58" y="611" width="831" height="1" fill="#d4d4d4" />
<rect x="32" y="611" width="25" height="1" fill="#bcbcbc" />
<rect x="58" y="631" width="831" height="1" fill="#d4d4d4" />
<rect x="32" y="631" width="25" height="1" fill="#bcbcbc" />
<rect x="58" y="651" width="831" height="1" fill="#d4d4d4" />
<rect x="32" y="651" width="25" height="1" fill="#bcbcbc" />
<rect x="58" y="671" width="831" height="1" fill="#d4d4d4" />
<rect x="32" y="671" width="25" height="1" fill="#bcbcbc" />
<rect x="58" y="691" width="831" height="1" fill="#d4d4d4" />
<rect x="32" y="691" width="25" height="1" fill="#bcbcbc" />
<rect x="58" y="711" width="831" height="1" fill="#d4d4d4" />
<rect x="32" y="711" width="25" height="1" fill="#bcbcbc" />
<rect x="58" y="731" width="831" height="1" fill="#d4d4d4" />
<rect x="32" y="731" width="25" height="1" fill="#bcbcbc" />
<rect x="58" y="751" width="831" height="1" fill="#d4d4d4" />
<rect x="32" y="751" width="25" height="1" fill="#bcbcbc" />
<rect x="149" y="252" width="1" height="507" fill="#d4d4d4" />
<rect x="230" y="252" width="1" height="507" fill="#d4d4d4" />
<rect x="294" y="252" width="1" height="507" fill="#d4d4d4" />
<rect x="403" y="252" width="1" height="507" fill="#d4d4d4" />
<rect x="467" y="252" width="1" height="507" fill="#d4d4d4" />
<rect x="531" y="252" width="1" height="507" fill="#d4d4d4" />
<rect x="595" y="252" width="1" height="507" fill="#d4d4d4" />
<rect x="659" y="252" width="1" height="507" fill="#d4d4d4" />
<rect x="723" y="252" width="1" height="507" fill="#d4d4d4" />
<rect x="787" y="252" width="1" height="507" fill="#d4d4d4" />
<rect x="851" y="252" width="1" height="507" fill="#d4d4d4" />
<text x="44.5" y="267" font-size="12" fill="#262626" font-family="Liberation Sans" text-anchor="middle" >1</text>
<text x="44.5" y="287" font-size="12" fill="#262626" font-family="Liberation Sans" text-anchor="middle" >2</text>
<text x="44.5" y="307" font-size="12" fill="#262626" font-family="Liberation Sans" text-anchor="middle" >3</text>
<text x="44.5" y="327" font-size="12" fill="#262626" font-family="Liberation Sans" text-anchor="middle" >4</text>
<text x="44.5" y="347" font-size="12" fill="#262626" font-family="Liberation Sans" text-anchor="middle" >5</text>
<text x="44.5" y="367" font-size="12" fill="#262626" font-family="Liberation Sans" text-anchor="middle" >6</text>
<text x="44.5" y="387" font-size="12" fill="#262626" font-family="Liberation Sans" text-anchor="middle" >7</text>
<text x="44.5" y="407" font-size="12" fill="#262626" font-family="Liberation Sans" text-anchor="middle" >8</text>
<text x="44.5" y="427" font-size="12" fill="#262626" font-family="Liberation Sans" text-anchor="middle" >9</text>
<text x="44.5" y="447" font-size="12" fill="#262626" font-family="Liberation Sans" text-anchor="middle" >10</text>
<text x="44.5" y="467" font-size="12" fill="#262626" font-family="Liberation Sans" text-anchor="middle" >11</text>
<text x="44.5" y="487" font-size="12" fill="#262626" font-family="Liberation Sans" text-anchor="middle" >12</text>
<text x="44.5" y="507" font-size="12" fill="#262626" font-family="Liberation Sans" text-anchor="middle" >13</text>
<text x="44.5" y="527" font-size="12" fill="#262626" font-family="Liberation Sans" text-anchor="middle" >14</text>
<text x="44.5" y="547" font-size="12" fill="#262626" font-family="Liberation Sans" text-anchor="middle" >15</text>
<text x="44.5" y="567" font-size="12" fill="#262626" font-family="Liberation Sans" text-anchor="middle" >16</text>
<text x="44.5" y="587" font-size="12" fill="#262626" font-family="Liberation Sans" text-anchor="middle" >17</text>
<text x="44.5" y="607" font-size="12" fill="#262626" font-family="Liberation Sans" text-anchor="middle" >18</text>
<text x="44.5" y="627" font-size="12" fill="#262626" font-family="Liberation Sans" text-anchor="middle" >19</text>
<text x="44.5" y="647" font-size="12" fill="#262626" font-family="Liberation Sans" text-anchor="middle" >20</text>
<text x="44.5" y="667" font-size="12" fill="#262626" font-family="Liberation Sans" text-anchor="middle" >21</text>
<text x="44.5" y="687" font-size="12" fill="#262626" font-family="Liberation Sans" text-anchor="middle" >22</text>
<text x="44.5" y="707" font-size="12" fill="#262626" font-family="Liberation Sans" text-anchor="middle" >23</text>
<text x="44.5" y="727" font-size="12" fill="#262626" font-family="Liberation Sans" text-anchor="middle" >24</text>
<text x="44.5" y="747" font-size="12" fill="#262626" font-family="Liberation Sans" text-anchor="middle" >25</text>
<text x="44.5" y="767" font-size="12" fill="#262626" font-family="Liberation Sans" text-anchor="middle" >26</text>
<rect x="150" y="292" width="80" height="199" fill="#e8eef8" />
<rect x="58" y="271" width="173" height="1" fill="#000" />
<rect x="58" y="291" width="173" height="1" fill="#000" />
<rect x="58" y="311" width="173" height="1" fill="#000" />
<rect x="58" y="331" width="173" height="1" fill="#000" />
<rect x="58" y="351" width="173" height="1" fill="#000" />
<rect x="58" y="371" width="173" height="1" fill="#000" />
<rect x="58" y="391" width="173" height="1" fill="#000" />
<rect x="58" y="411" width="173" height="1" fill="#000" />
<rect x="58" y="431" width="173" height="1" fill="#000" />
<rect x="58" y="451" width="173" height="1" fill="#000" />
<rect x="58" y="471" width="173" height="1" fill="#000" />
<rect x="58" y="491" width="173" height="1" fill="#000" />
<rect x="58" y="511" width="173" height="1" fill="#000" />
<rect x="58" y="531" width="173" height="1" fill="#000" />
<rect x="58" y="551" width="173" height="1" fill="#000" />
<rect x="58" y="571" width="173" height="1" fill="#000" />
<rect x="58" y="591" width="173" height="1" fill="#000" />
<rect x="58" y="611" width="173" height="1" fill="#000" />
<rect x="58" y="631" width="173" height="1" fill="#000" />
<rect x="58" y="651" width="173" height="1" fill="#000" />
<rect x="58" y="671" width="173" height="1" fill="#000" />
<rect x="58" y="691" width="173" height="1" fill="#000" />
<rect x="58" y="711" width="173" height="1" fill="#000" />
<rect x="58" y="731" width="173" height="1" fill="#000" />
<rect x="58" y="751" width="173" height="1" fill="#000" />
<rect x="58" y="251" width="173" height="1" fill="#9ea3a0" />
<rect x="149" y="252" width="1" height="499" fill="#000" />
<rect x="230" y="252" width="1" height="499" fill="#000" />
<text x="60.5" y="267" font-size="12.5" fill="#000" font-family="Liberation Sans" textLength="55" lengthAdjust="spacingAndGlyphs" >Продано</text>
<text x="152.3" y="267" font-size="12.5" fill="#000" font-family="Liberation Sans" textLength="57.2" lengthAdjust="spacingAndGlyphs" >Прибыль</text>
<text x="401" y="267" font-size="12.5" fill="#000" font-family="Liberation Sans" text-anchor="end" >543534</text>
<text x="147.2" y="287" font-size="12.5" fill="#000" font-family="Liberation Sans" text-anchor="end" >14</text>
<text x="228.2" y="287" font-size="12.5" fill="#000" font-family="Liberation Sans" text-anchor="end" >54234</text>
<text x="147.2" y="307" font-size="12.5" fill="#000" font-family="Liberation Sans" text-anchor="end" >17</text>
<text x="228.2" y="307" font-size="12.5" fill="#000" font-family="Liberation Sans" text-anchor="end" >76345</text>
<text x="147.2" y="327" font-size="12.5" fill="#000" font-family="Liberation Sans" text-anchor="end" >26</text>
<text x="228.2" y="327" font-size="12.5" fill="#000" font-family="Liberation Sans" text-anchor="end" >45234</text>
<text x="147.2" y="347" font-size="12.5" fill="#000" font-family="Liberation Sans" text-anchor="end" >78</text>
<text x="228.2" y="347" font-size="12.5" fill="#000" font-family="Liberation Sans" text-anchor="end" >178000</text>
<text x="147.2" y="367" font-size="12.5" fill="#000" font-family="Liberation Sans" text-anchor="end" >3</text>
<text x="228.2" y="367" font-size="12.5" fill="#000" font-family="Liberation Sans" text-anchor="end" >4523</text>
<text x="147.2" y="387" font-size="12.5" fill="#000" font-family="Liberation Sans" text-anchor="end" >15</text>
<text x="228.2" y="387" font-size="12.5" fill="#000" font-family="Liberation Sans" text-anchor="end" >53452</text>
<text x="147.2" y="407" font-size="12.5" fill="#000" font-family="Liberation Sans" text-anchor="end" >43</text>
<text x="228.2" y="407" font-size="12.5" fill="#000" font-family="Liberation Sans" text-anchor="end" >78000</text>
<text x="147.2" y="427" font-size="12.5" fill="#000" font-family="Liberation Sans" text-anchor="end" >27</text>
<text x="228.2" y="427" font-size="12.5" fill="#000" font-family="Liberation Sans" text-anchor="end" >45234</text>
<text x="147.2" y="447" font-size="12.5" fill="#000" font-family="Liberation Sans" text-anchor="end" >28</text>
<text x="228.2" y="447" font-size="12.5" fill="#000" font-family="Liberation Sans" text-anchor="end" >97643</text>
<text x="147.2" y="467" font-size="12.5" fill="#000" font-family="Liberation Sans" text-anchor="end" >31</text>
<text x="228.2" y="467" font-size="12.5" fill="#000" font-family="Liberation Sans" text-anchor="end" >4524</text>
<text x="147.2" y="487" font-size="12.5" fill="#000" font-family="Liberation Sans" text-anchor="end" >78</text>
<text x="228.2" y="487" font-size="12.5" fill="#000" font-family="Liberation Sans" text-anchor="end" >245908</text>
<text x="147.2" y="507" font-size="12.5" fill="#000" font-family="Liberation Sans" text-anchor="end" >134</text>
<text x="228.2" y="507" font-size="12.5" fill="#000" font-family="Liberation Sans" text-anchor="end" >234524</text>
<text x="147.2" y="527" font-size="12.5" fill="#000" font-family="Liberation Sans" text-anchor="end" >53</text>
<text x="228.2" y="527" font-size="12.5" fill="#000" font-family="Liberation Sans" text-anchor="end" >34534</text>
<text x="147.2" y="547" font-size="12.5" fill="#000" font-family="Liberation Sans" text-anchor="end" >54</text>
<text x="228.2" y="547" font-size="12.5" fill="#000" font-family="Liberation Sans" text-anchor="end" >76345</text>
<text x="147.2" y="567" font-size="12.5" fill="#000" font-family="Liberation Sans" text-anchor="end" >345</text>
<text x="228.2" y="567" font-size="12.5" fill="#000" font-family="Liberation Sans" text-anchor="end" >2653</text>
<text x="147.2" y="587" font-size="12.5" fill="#000" font-family="Liberation Sans" text-anchor="end" >34</text>
<text x="228.2" y="587" font-size="12.5" fill="#000" font-family="Liberation Sans" text-anchor="end" >178000</text>
<text x="147.2" y="607" font-size="12.5" fill="#000" font-family="Liberation Sans" text-anchor="end" >43</text>
<text x="228.2" y="607" font-size="12.5" fill="#000" font-family="Liberation Sans" text-anchor="end" >435</text>
<text x="147.2" y="627" font-size="12.5" fill="#000" font-family="Liberation Sans" text-anchor="end" >22</text>
<text x="228.2" y="627" font-size="12.5" fill="#000" font-family="Liberation Sans" text-anchor="end" >4234</text>
<text x="147.2" y="647" font-size="12.5" fill="#000" font-family="Liberation Sans" text-anchor="end" >43</text>
<text x="228.2" y="647" font-size="12.5" fill="#000" font-family="Liberation Sans" text-anchor="end" >43543</text>
<text x="147.2" y="667" font-size="12.5" fill="#000" font-family="Liberation Sans" text-anchor="end" >5363</text>
<text x="228.2" y="667" font-size="12.5" fill="#000" font-family="Liberation Sans" text-anchor="end" >45234</text>
<text x="147.2" y="687" font-size="12.5" fill="#000" font-family="Liberation Sans" text-anchor="end" >324</text>
<text x="228.2" y="687" font-size="12.5" fill="#000" font-family="Liberation Sans" text-anchor="end" >543534</text>
<text x="147.2" y="707" font-size="12.5" fill="#000" font-family="Liberation Sans" text-anchor="end" >31</text>
<text x="228.2" y="707" font-size="12.5" fill="#000" font-family="Liberation Sans" text-anchor="end" >4524</text>
<text x="147.2" y="727" font-size="12.5" fill="#000" font-family="Liberation Sans" text-anchor="end" >78</text>
<text x="228.2" y="727" font-size="12.5" fill="#000" font-family="Liberation Sans" text-anchor="end" >531908</text>
<text x="147.2" y="747" font-size="12.5" fill="#000" font-family="Liberation Sans" text-anchor="end" >134</text>
<text x="228.2" y="747" font-size="12.5" fill="#000" font-family="Liberation Sans" text-anchor="end" >234524</text>
<rect x="148" y="290" width="2" height="202" fill="#4472c4" />
<rect x="230" y="290" width="2" height="202" fill="#4472c4" />
<rect x="148" y="290" width="84" height="2" fill="#4472c4" />
<rect x="148" y="490" width="84" height="2" fill="#4472c4" />
<rect x="147" y="289" width="5" height="5" fill="#4472c4" />
<rect x="228" y="289" width="5" height="5" fill="#4472c4" />
<rect x="147" y="489" width="5" height="5" fill="#4472c4" />
<rect x="228" y="489" width="5" height="5" fill="#4472c4" />
<rect x="890" y="232" width="21" height="528" fill="#e6e6e6" />
<rect x="893" y="234" width="15" height="15" fill="#fff" />
<rect x="893.5" y="234.5" width="14" height="14" fill="none" stroke="#c6c6c6" stroke-width="1" />
<path d="M896.5 243.5h8l-4-4z" fill="#6f5a6a" shape-rendering="auto"/>
<rect x="893" y="249" width="15" height="476" fill="#fff" />
<rect x="893.5" y="249.5" width="14" height="475" fill="none" stroke="#c6c6c6" stroke-width="1" />
<rect x="893" y="725" width="15" height="20" fill="#d9d9d9" />
<rect x="893" y="745" width="15" height="15" fill="#fff" />
<rect x="893.5" y="745.5" width="14" height="14" fill="none" stroke="#c6c6c6" stroke-width="1" />
<path d="M896.5 750.5h8l-4 4z" fill="#6f5a6a" shape-rendering="auto"/>
<rect x="58" y="759" width="832" height="1" fill="#9ea3a0" />
<rect x="32" y="760" width="880" height="27" fill="#e6e6e6" />
<rect x="32" y="759" width="858" height="1" fill="#9ea3a0" />
<path d="M63 769v7l-3.5-3.5z" fill="#c2c2c2" shape-rendering="auto"/>
<path d="M88 769v7l3.5-3.5z" fill="#c2c2c2" shape-rendering="auto"/>
<rect x="132" y="759" width="60" height="25" fill="#fff" />
<rect x="132" y="759" width="1" height="25" fill="#9a9f9c" />
<rect x="191" y="759" width="1" height="25" fill="#9a9f9c" />
<rect x="132" y="782" width="60" height="2" fill="#217346" />
<text x="144.1" y="777.2" font-size="13" fill="#1f6a3f" font-family="Liberation Sans" textLength="35.3" lengthAdjust="spacingAndGlyphs" font-weight="bold" >Лист1</text>
<g shape-rendering="auto"><circle cx="233" cy="773" r="7.6" fill="none" stroke="#6e8a76" stroke-width="1.3"/><path d="M233 768.5v9M228.5 773h9" stroke="#6e8a76" stroke-width="1.6"/></g>
<rect x="566" y="759" width="1" height="28" fill="#c6c6c6" />
<rect x="576" y="766" width="15" height="15" fill="#fff" />
<rect x="576.5" y="766.5" width="14" height="14" fill="none" stroke="#c6c6c6" stroke-width="1" />
<path d="M586 769.5v8l-4-4z" fill="#6f5a6a" shape-rendering="auto"/>
<rect x="613" y="766" width="240" height="15" fill="#fff" />
<rect x="613.5" y="766.5" width="239" height="14" fill="none" stroke="#c6c6c6" stroke-width="1" />
<rect x="591" y="766" width="22" height="15" fill="#d9d9d9" />
<rect x="853" y="766" width="22" height="15" fill="#d9d9d9" />
<rect x="875" y="766" width="15" height="15" fill="#fff" />
<rect x="875.5" y="766.5" width="14" height="14" fill="none" stroke="#c6c6c6" stroke-width="1" />
<path d="M880 769.5v8l4-4z" fill="#6f5a6a" shape-rendering="auto"/>
<rect x="32" y="787" width="880" height="19" fill="#f3f3f3" />
<rect x="32" y="787" width="879" height="1" fill="#d9d9d9" />
<rect x="597" y="787" width="40" height="19" fill="#c8c8c8" />
<g shape-rendering="auto" fill="none" stroke="#6f5a6a" stroke-width="1.2"><rect x="610" y="791" width="12" height="12"/><path d="M614 791v12M618 791v12M610 795h12M610 799h12"/><rect x="650" y="791" width="13" height="12"/><path d="M653 794h7M653 796.5h7M653 799h7M653 801.5h7"/><rect x="690" y="791" width="13" height="12"/><path d="M694 791v5h4v-5"/></g>
<rect x="723" y="798" width="8" height="1" fill="#555" />
<rect x="736" y="798" width="100" height="1" fill="#aaa" />
<rect x="784" y="793" width="5" height="10" fill="#6f5a6a" />
<path d="M841 798.5h8M845 794.5v8" stroke="#555" stroke-width="1.1" shape-rendering="auto"/>
<text x="862.4" y="803" font-size="12" fill="#444" font-family="Liberation Sans" textLength="29.3" lengthAdjust="spacingAndGlyphs" >100 %</text>
<rect x="911" y="32" width="1" height="774" fill="#217346" />
<rect x="257" y="344" width="480" height="288" fill="#fff" />
<rect x="257.5" y="344.5" width="479" height="287" fill="none" stroke="#8f9c95" stroke-width="1" />
<rect x="312" y="392" width="409" height="1" fill="#d9d9d9" />
<text x="301" y="395.8" font-size="10.5" fill="#4a4a4a" font-family="Liberation Sans" text-anchor="end" >300000</text>
<rect x="312" y="427" width="409" height="1" fill="#d9d9d9" />
<text x="301" y="430.8" font-size="10.5" fill="#4a4a4a" font-family="Liberation Sans" text-anchor="end" >250000</text>
<rect x="312" y="461" width="409" height="1" fill="#d9d9d9" />
<text x="301" y="464.8" font-size="10.5" fill="#4a4a4a" font-family="Liberation Sans" text-anchor="end" >200000</text>
<rect x="312" y="496" width="409" height="1" fill="#d9d9d9" />
<text x="301" y="499.8" font-size="10.5" fill="#4a4a4a" font-family="Liberation Sans" text-anchor="end" >150000</text>
<rect x="312" y="531" width="409" height="1" fill="#d9d9d9" />
<text x="301" y="534.8" font-size="10.5" fill="#4a4a4a" font-family="Liberation Sans" text-anchor="end" >100000</text>
<rect x="312" y="566" width="409" height="1" fill="#d9d9d9" />
<text x="301" y="569.8" font-size="10.5" fill="#4a4a4a" font-family="Liberation Sans" text-anchor="end" >50000</text>
<rect x="312" y="600" width="409" height="1" fill="#d9d9d9" />
<text x="301" y="603.8" font-size="10.5" fill="#4a4a4a" font-family="Liberation Sans" text-anchor="end" >0</text>
<rect x="326.8" y="547.2" width="12.8" height="53.0" fill="#4472c4" shape-rendering="auto"/>
<text x="333.15" y="619" font-size="10.5" fill="#4a4a4a" font-family="Liberation Sans" text-anchor="middle" >1</text>
<rect x="367.6" y="568.8" width="12.8" height="31.4" fill="#4472c4" shape-rendering="auto"/>
<text x="374.04999999999995" y="619" font-size="10.5" fill="#4a4a4a" font-family="Liberation Sans" text-anchor="middle" >2</text>
<rect x="408.6" y="476.7" width="12.8" height="123.5" fill="#4472c4" shape-rendering="auto"/>
<text x="414.95" y="619" font-size="10.5" fill="#4a4a4a" font-family="Liberation Sans" text-anchor="middle" >3</text>
<rect x="449.5" y="597.1" width="12.8" height="3.1" fill="#4472c4" shape-rendering="auto"/>
<text x="455.85" y="619" font-size="10.5" fill="#4a4a4a" font-family="Liberation Sans" text-anchor="middle" >4</text>
<rect x="490.4" y="563.1" width="12.8" height="37.1" fill="#4472c4" shape-rendering="auto"/>
<text x="496.75" y="619" font-size="10.5" fill="#4a4a4a" font-family="Liberation Sans" text-anchor="middle" >5</text>
<rect x="531.2" y="546.1" width="12.8" height="54.1" fill="#4472c4" shape-rendering="auto"/>
<text x="537.65" y="619" font-size="10.5" fill="#4a4a4a" font-family="Liberation Sans" text-anchor="middle" >6</text>
<rect x="572.1" y="568.8" width="12.8" height="31.4" fill="#4472c4" shape-rendering="auto"/>
<text x="578.55" y="619" font-size="10.5" fill="#4a4a4a" font-family="Liberation Sans" text-anchor="middle" >7</text>
<rect x="613.1" y="532.4" width="12.8" height="67.8" fill="#4472c4" shape-rendering="auto"/>
<text x="619.45" y="619" font-size="10.5" fill="#4a4a4a" font-family="Liberation Sans" text-anchor="middle" >8</text>
<rect x="653.9" y="597.1" width="12.8" height="3.1" fill="#4472c4" shape-rendering="auto"/>
<text x="660.3499999999999" y="619" font-size="10.5" fill="#4a4a4a" font-family="Liberation Sans" text-anchor="middle" >9</text>
<rect x="694.9" y="429.5" width="12.8" height="170.7" fill="#4472c4" shape-rendering="auto"/>
<text x="701.25" y="619" font-size="10.5" fill="#4a4a4a" font-family="Liberation Sans" text-anchor="middle" >10</text>
<text x="412.8" y="372" font-size="17" fill="#595959" font-family="Liberation Sans" textLength="169" lengthAdjust="spacingAndGlyphs" >Название диаграммы</text>
<circle cx="257.5" cy="344.5" r="5" fill="#fff" stroke="#8f9c95" stroke-width="1.6" shape-rendering="auto"/>
<circle cx="736.5" cy="344.5" r="5" fill="#fff" stroke="#8f9c95" stroke-width="1.6" shape-rendering="auto"/>
<circle cx="257.5" cy="487.5" r="5" fill="#fff" stroke="#8f9c95" stroke-width="1.6" shape-rendering="auto"/>
<circle cx="736.5" cy="487.5" r="5" fill="#fff" stroke="#8f9c95" stroke-width="1.6" shape-rendering="auto"/>
<circle cx="257.5" cy="631.5" r="5" fill="#fff" stroke="#8f9c95" stroke-width="1.6" shape-rendering="auto"/>
<circle cx="736.5" cy="631.5" r="5" fill="#fff" stroke="#8f9c95" stroke-width="1.6" shape-rendering="auto"/>
<rect x="750" y="343" width="28" height="28" fill="#fff" />
<rect x="750.5" y="343.5" width="27" height="27" fill="none" stroke="#a0a0a0" stroke-width="1" />
<rect x="750" y="381" width="28" height="28" fill="#fff" />
<rect x="750.5" y="381.5" width="27" height="27" fill="none" stroke="#a0a0a0" stroke-width="1" />
<rect x="750" y="419" width="28" height="28" fill="#fff" />
<rect x="750.5" y="419.5" width="27" height="27" fill="none" stroke="#a0a0a0" stroke-width="1" />
<rect x="762" y="350" width="4" height="14" fill="#7a9c9c" />
<rect x="757" y="355" width="14" height="4" fill="#7a9c9c" />
<g shape-rendering="auto"><path d="M772.5 386l-6 8.5" stroke="#7a6470" stroke-width="3" stroke-linecap="butt"/><path d="M766.5 394.5l-1.5 2" stroke="#5f7a65" stroke-width="2"/><path d="M756 402.5l5.5-6.5c1.5-1.5 4-1 4.5 1c0.5 2-1 4-3 4.5z" fill="#3a74c8"/><circle cx="763.3" cy="398.3" r="1.6" fill="#fff"/></g>
<g shape-rendering="auto"><path d="M755.5 425h17l-5.5 6.5v9h-6v-9z" fill="#a59aa2" stroke="#5f7a65" stroke-width="1.3"/><path d="M758 426.5l4.5 5v8h1.5v-8.5l-4-4.5z" fill="#fff"/></g>
<defs><filter id="sh" x="-10%" y="-10%" width="120%" height="130%"><feGaussianBlur in="SourceAlpha" stdDeviation="1.5"/><feOffset dy="1.5"/><feComponentTransfer><feFuncA type="linear" slope="0.25"/></feComponentTransfer><feMerge><feMergeNode/><feMergeNode in="SourceGraphic"/></feMerge></filter><filter id="rsh" x="-10%" y="-50%" width="120%" height="200%"><feGaussianBlur in="SourceAlpha" stdDeviation="2"/><feOffset dx="1.5" dy="3"/><feComponentTransfer><feFuncA type="linear" slope="0.55"/></feComponentTransfer><feMerge><feMergeNode/><feMergeNode in="SourceGraphic"/></feMerge></filter></defs>
<rect x="319.5" y="287.5" width="201" height="62" fill="#fff" stroke="#c6c6c6" filter="url(#sh)"/>
<g shape-rendering="auto" fill="none" stroke="#6f5a6a" stroke-width="1.1"><path d="M341.5 305.3l8-8l7.3 7.6l-8 7z" fill="#fff"/><path d="M347 301v-5a2 2 0 0 1 4 0v5"/><circle cx="350.5" cy="301.8" r="0.9" fill="#6f5a6a"/></g><path d="M354.5 300.5l2.5 1.5l1.2 3l-0.8 5.5l-2 1l0.5-5z" fill="#2f6ec4" shape-rendering="auto"/>
<rect x="337" y="312" width="24" height="6" fill="#e07848" />
<path d="M362 303.5h5l-2.5 2.5z" fill="#6f5a6a" shape-rendering="auto"/>
<text x="327.2" y="335.5" font-size="12" fill="#444" font-family="Liberation Sans" textLength="41.8" lengthAdjust="spacingAndGlyphs" >Заливка</text>
<g shape-rendering="auto"><path d="M403 295.5h-16.5v15h5" fill="none" stroke="#6f5a6a" stroke-width="1.1"/><path d="M393 309.5l1-3.5l12-11.5l2.5 2.5l-12 11.5z" fill="#2f6ec4"/><path d="M405 296l1.5-1.5l2.5 2.5l-1.5 1.5z" fill="#fff"/></g>
<rect x="386" y="312" width="24" height="6" fill="#4472c4" />
<path d="M410.5 303.5h5l-2.5 2.5z" fill="#6f5a6a" shape-rendering="auto"/>
<text x="379.5" y="335.5" font-size="12" fill="#444" font-family="Liberation Sans" textLength="35.6" lengthAdjust="spacingAndGlyphs" >Контур</text>
<rect x="421" y="306" width="96" height="24" fill="#fff" />
<rect x="421.5" y="306.5" width="95" height="23" fill="none" stroke="#c6c6c6" stroke-width="1" />
<text x="424.5" y="321.5" font-size="12.5" fill="#262626" font-family="Liberation Sans" textLength="77.4" lengthAdjust="spacingAndGlyphs" >Область диагр</text>
<rect x="502" y="307" width="4" height="22" fill="#fff" />
<path d="M507.5 316h5l-2.5 2.5z" fill="#6f5a6a" shape-rendering="auto"/>
<rect x="319.5" y="362.5" width="246" height="460" fill="#fff" stroke="#c0c0c0" filter="url(#sh)"/>
<rect x="565" y="362" width="1" height="444" fill="#a8a8a8" />
<rect x="566" y="362" width="1" height="444" fill="#d0d0d0" />
<text x="353.6" y="383" font-size="12" fill="#333" font-family="Liberation Sans" textLength="49.8" lengthAdjust="spacingAndGlyphs" >Вырезать</text>
<rect x="354" y="384" width="7" height="1" fill="#333" />
<text x="353.6" y="407" font-size="12" fill="#333" font-family="Liberation Sans" textLength="64.1" lengthAdjust="spacingAndGlyphs" >Копировать</text>
<rect x="361" y="408" width="6" height="1" fill="#333" />
<text x="353.6" y="485" font-size="12" fill="#333" font-family="Liberation Sans" textLength="108.1" lengthAdjust="spacingAndGlyphs" >Восстановить стиль</text>
<rect x="368" y="486" width="6" height="1" fill="#333" />
<text x="353.6" y="511" font-size="12" fill="#333" font-family="Liberation Sans" textLength="47.5" lengthAdjust="spacingAndGlyphs" >Шрифт...</text>
<rect x="354" y="512" width="10" height="1" fill="#333" />
<text x="353.6" y="537" font-size="12" fill="#333" font-family="Liberation Sans" textLength="151" lengthAdjust="spacingAndGlyphs" >Изменить тип диаграммы...</text>
<rect x="495" y="538" width="3" height="1" fill="#333" />
<text x="353.6" y="561" font-size="12" fill="#333" font-family="Liberation Sans" textLength="136.1" lengthAdjust="spacingAndGlyphs" >Сохранить как шаблон...</text>
<rect x="362" y="562" width="7" height="1" fill="#333" />
<text x="353.6" y="585" font-size="12" fill="#333" font-family="Liberation Sans" textLength="98.9" lengthAdjust="spacingAndGlyphs" >Выбрать данные...</text>
<rect x="354" y="586" width="7" height="1" fill="#333" />
<text x="353.6" y="609" font-size="12" fill="#333" font-family="Liberation Sans" textLength="144.1" lengthAdjust="spacingAndGlyphs" >Переместить диаграмму...</text>
<rect x="382" y="610" width="8" height="1" fill="#333" />
<text x="353.6" y="633" font-size="12" fill="#b4b4b4" font-family="Liberation Sans" textLength="162.5" lengthAdjust="spacingAndGlyphs" >Поворот объемной фигуры...</text>
<rect x="418" y="634" width="7" height="1" fill="#b4b4b4" />
<text x="353.6" y="659" font-size="12" fill="#b4b4b4" font-family="Liberation Sans" textLength="76" lengthAdjust="spacingAndGlyphs" >Группировать</text>
<rect x="354" y="660" width="6" height="1" fill="#b4b4b4" />
<text x="353.6" y="683" font-size="12" fill="#b4b4b4" font-family="Liberation Sans" textLength="100" lengthAdjust="spacingAndGlyphs" >На передний план</text>
<rect x="404" y="684" width="7" height="1" fill="#b4b4b4" />
<text x="353.6" y="707" font-size="12" fill="#b4b4b4" font-family="Liberation Sans" textLength="85.1" lengthAdjust="spacingAndGlyphs" >На задний план</text>
<rect x="397" y="708" width="6" height="1" fill="#b4b4b4" />
<text x="353.6" y="733" font-size="12" fill="#333" font-family="Liberation Sans" textLength="110" lengthAdjust="spacingAndGlyphs" >Назначить макрос...</text>
<rect x="362" y="734" width="7" height="1" fill="#333" />
<text x="353.6" y="759" font-size="12" fill="#333" font-family="Liberation Sans" textLength="174.4" lengthAdjust="spacingAndGlyphs" >Изменить замещающий текст...</text>
<rect x="455" y="760" width="9" height="1" fill="#333" />
<text x="353.6" y="783" font-size="12" fill="#333" font-family="Liberation Sans" textLength="166.1" lengthAdjust="spacingAndGlyphs" >Формат области диаграммы...</text>
<rect x="354" y="784" width="9" height="1" fill="#333" />
<text x="353.6" y="809" font-size="12" fill="#b4b4b4" font-family="Liberation Sans" textLength="180" lengthAdjust="spacingAndGlyphs" >Параметры сводной диаграммы...</text>
<rect x="353" y="467" width="212" height="1" fill="#e1e1e1" />
<rect x="353" y="493" width="212" height="1" fill="#e1e1e1" />
<rect x="353" y="519" width="212" height="1" fill="#e1e1e1" />
<rect x="353" y="641" width="212" height="1" fill="#e1e1e1" />
<rect x="353" y="715" width="212" height="1" fill="#e1e1e1" />
<rect x="353" y="741" width="212" height="1" fill="#e1e1e1" />
<rect x="353" y="791" width="212" height="1" fill="#e1e1e1" />
<rect x="345" y="415" width="220" height="22" fill="#e2e2e2" />
<text x="354.6" y="430.5" font-size="12" fill="#4b5566" font-family="Liberation Sans" textLength="117.6" lengthAdjust="spacingAndGlyphs" font-weight="bold" >Параметры вставки:</text>
<path d="M552 650.5v8l4.5-4z" fill="#b8b8b8" shape-rendering="auto"/>
<path d="M552 674.5v8l4.5-4z" fill="#b8b8b8" shape-rendering="auto"/>
<path d="M552 698.5v8l4.5-4z" fill="#b8b8b8" shape-rendering="auto"/>
<rect x="542" y="672" width="1" height="13" fill="#e1e1e1" />
<rect x="542" y="696" width="1" height="13" fill="#e1e1e1" />
<g shape-rendering="auto" fill="none"><path d="M328 372l9 9M337 372l-9 9" stroke="#6f5a6a" stroke-width="1.5"/><circle cx="329" cy="383" r="2.4" stroke="#2f6ec4" stroke-width="1.3"/><circle cx="337" cy="383" r="2.4" stroke="#2f6ec4" stroke-width="1.3"/></g>
<g shape-rendering="auto"><path d="M325.5 397.5h6l2 2v8.5h-8z" fill="#fff" stroke="#6f5a6a"/><path d="M330.5 401.5h6l3 3v5.5h-9z" fill="#fff" stroke="#6f5a6a"/></g>
<rect x="327" y="400" width="3" height="1" fill="#2f6ec4" />
<rect x="327" y="402" width="3" height="1" fill="#2f6ec4" />
<rect x="327" y="404" width="3" height="1" fill="#2f6ec4" />
<rect x="332" y="404" width="6" height="1" fill="#2f6ec4" />
<rect x="332" y="406" width="6" height="1" fill="#2f6ec4" />
<rect x="332" y="408" width="6" height="1" fill="#2f6ec4" />
<g transform="translate(325.7 418.4) scale(0.7)" shape-rendering="auto"><path d="M0 3.5q0-1.5 1.5-2.5h1.5v5.5h12v-5.5h1.5q1.5 1 1.5 2.5v17.5h-18z" fill="#ebb467"/><path d="M3 5h12v-0.7c0-1-0.8-1.5-1.5-1.5h-2.5v-0.8a2 2 0 0 0-4 0v0.8h-2.5c-0.7 0-1.5 0.5-1.5 1.5z" fill="#6f5a6a"/><rect x="8.2" y="1.3" width="1.6" height="1.4" fill="#fff"/><g fill="#fbe7c6"><circle cx="4.2" cy="8.5" r="0.6"/><circle cx="3.2" cy="11.5" r="0.6"/><circle cx="5.3" cy="12.5" r="0.6"/><circle cx="2.5" cy="14.5" r="0.6"/><circle cx="4.5" cy="15.5" r="0.6"/><circle cx="2.5" cy="17.5" r="0.6"/><circle cx="6.5" cy="19.5" r="0.6"/><circle cx="6.5" cy="9.5" r="0.6"/></g><path d="M10.5 9.5h7l3 3v10.5h-10z" fill="#fff" stroke="#6f5a6a" stroke-width="1"/><path d="M17.5 9.5v3h3" fill="none" stroke="#6f5a6a" stroke-width="1"/></g>
<g transform="translate(351 441) scale(1.0)" shape-rendering="auto"><path d="M0 3.5q0-1.5 1.5-2.5h1.5v5.5h12v-5.5h1.5q1.5 1 1.5 2.5v17.5h-18z" fill="#ebb467"/><path d="M3 5h12v-0.7c0-1-0.8-1.5-1.5-1.5h-2.5v-0.8a2 2 0 0 0-4 0v0.8h-2.5c-0.7 0-1.5 0.5-1.5 1.5z" fill="#6f5a6a"/><rect x="8.2" y="1.3" width="1.6" height="1.4" fill="#fff"/><g fill="#fbe7c6"><circle cx="4.2" cy="8.5" r="0.6"/><circle cx="3.2" cy="11.5" r="0.6"/><circle cx="5.3" cy="12.5" r="0.6"/><circle cx="2.5" cy="14.5" r="0.6"/><circle cx="4.5" cy="15.5" r="0.6"/><circle cx="2.5" cy="17.5" r="0.6"/><circle cx="6.5" cy="19.5" r="0.6"/><circle cx="6.5" cy="9.5" r="0.6"/></g><path d="M10.5 9.5h7l3 3v10.5h-10z" fill="#fff" stroke="#6f5a6a" stroke-width="1"/><path d="M17.5 9.5v3h3" fill="none" stroke="#6f5a6a" stroke-width="1"/></g>
<g shape-rendering="auto"><path d="M331 475.5h9.5v12h-11.5v-8" fill="#fff" stroke="#6f5a6a" stroke-width="1.1"/><circle cx="332.5" cy="480.5" r="1.1" fill="#6f5a6a"/><circle cx="332.5" cy="484.3" r="1.1" fill="none" stroke="#6f5a6a" stroke-width="0.8"/><path d="M335 480.5h4M335 484.5h4" stroke="#6f5a6a" stroke-width="1.1"/><path d="M334 476c-1-2.5-4.5-3-7-0.5" stroke="#2f6ec4" stroke-width="1.6" fill="none"/><path d="M324 475.5l2.5 5l3-3.5z" fill="#2f6ec4"/></g>
<path shape-rendering="auto" d="M328.6 511.2l3.9-8.6h0.8l3.9 8.6M330.2 508h5.4" fill="none" stroke="#333" stroke-width="1.3"/>
<rect x="326" y="531" width="4" height="9" fill="#2f6ec4" />
<rect x="331" y="526" width="4" height="14" fill="#e8b062" />
<rect x="336" y="529" width="4" height="11" fill="#6f5a6a" />
<rect x="326" y="553" width="4" height="10" fill="#2f6ec4" />
<rect x="331" y="549" width="4" height="5" fill="#e8b062" />
<rect x="336" y="551" width="4.5" height="2.5" fill="#6f5a6a" />
<path shape-rendering="auto" d="M331 555h10v10.5h-10z" fill="#6f5a6a"/>
<rect x="333" y="556" width="6" height="3.5" fill="#fff" />
<rect x="333" y="561.5" width="6" height="3" fill="#fff" />
<rect x="333" y="562" width="1" height="1.5" fill="#2f6ec4" />
<rect x="338" y="562" width="1" height="1.5" fill="#2f6ec4" />
<g shape-rendering="auto" fill="none" stroke="#6f5a6a"><path d="M325.5 584.5v-11h12M325.5 577.5h7M329.5 573.5v11h-4"/><rect x="332.5" y="577.5" width="8.5" height="10"/><path d="M335 586.5v-3M337 586.5v-5M339 586.5v-2"/></g>
<rect x="326" y="573" width="12" height="2" fill="#6f5a6a" />
<rect x="331" y="577" width="1" height="3" fill="#e07848" />
<g shape-rendering="auto" fill="none" stroke="#6f5a6a"><path d="M326 610.5v-12h14.5v10.5h-5.5l-1.5 1.5h-5z" /><path d="M328.5 606.5h8M329 606v-4.5h1.5v4.5M331.5 606v-6h1.5v6M334 606v-3h1.5v3"/></g>
<g shape-rendering="auto"><path d="M326.5 624.5l2-2h9.5l1.5 1.5v9.5l-1.5 1.5h-9.5l-1.5-1.5z" fill="#e4e4e4" stroke="#b4b4b4" stroke-width="1.1"/><path d="M337.5 623v12" stroke="#b4b4b4" stroke-width="1.5"/></g>
<g shape-rendering="auto" fill="none" stroke="#a8a8a8" stroke-width="1.2"><rect x="327.5" y="649.5" width="8" height="7"/><rect x="330.5" y="652.5" width="8" height="7.5"/></g>
<rect x="325" y="647" width="2.5" height="2.5" fill="#a8a8a8" />
<rect x="339" y="647" width="2.5" height="2.5" fill="#a8a8a8" />
<rect x="325" y="660" width="2.5" height="2.5" fill="#a8a8a8" />
<rect x="339" y="660" width="2.5" height="2.5" fill="#a8a8a8" />
<g shape-rendering="auto" fill="none" stroke="#a8a8a8" stroke-width="1.1"><path d="M325.5 677v-4.5h5M340 682v4.5h-5"/></g>
<rect x="328" y="674" width="9" height="9" fill="#d4d4d4" />
<g shape-rendering="auto" fill="none" stroke="#a8a8a8" stroke-width="1.1"><rect x="325.5" y="695" width="5" height="5"/><rect x="334.5" y="703.5" width="5" height="5"/></g>
<rect x="328" y="699" width="6" height="6" fill="#d8d8d8" />
<rect x="331" y="697" width="4" height="4" fill="#d8d8d8" />
<g shape-rendering="auto"><rect x="325.5" y="747.5" width="13.5" height="13" fill="#fff" stroke="#6f5a6a" stroke-width="1.1"/><circle cx="334.6" cy="750.6" r="1.5" fill="#e8b062"/><path d="M327 758.5v-3l1.5-2l1.5 1l1.5 3l1-1.5l1.5 0.5l1.5 1.5v1z" fill="#2f6ec4"/><rect x="331" y="758" width="10" height="4.5" fill="#fff" stroke="#5f7a65" stroke-width="1.1"/><path d="M333 760.3h6" stroke="#9aa89e"/></g>
<g shape-rendering="auto"><rect x="326" y="777" width="4" height="8" fill="#b8b8b8"/><rect x="331" y="772" width="4" height="9" fill="#6a8a72"/><path d="M341 775l-4.5 6" stroke="#6f5a6a" stroke-width="2.4"/><path d="M329 787.5l3.5-4c1-1 3-1.2 4 0c0.6 1.2 0 2.6-1.5 3.2z" fill="#2f6ec4"/><circle cx="335.3" cy="784" r="0.9" fill="#fff"/></g>
<g shape-rendering="auto" fill="none" stroke="#c4c4c4"><rect x="325.5" y="797.5" width="12" height="9"/><path d="M325.5 801h12M329 797.5v9"/></g>
<rect x="317.25" y="363.5" width="252" height="30.2" rx="8" ry="8" fill="none" stroke="#ff0000" stroke-width="4.4" filter="url(#rsh)" shape-rendering="auto"/>
<rect x="0" y="806" width="944" height="33" fill="#000" /></svg></body></html>
